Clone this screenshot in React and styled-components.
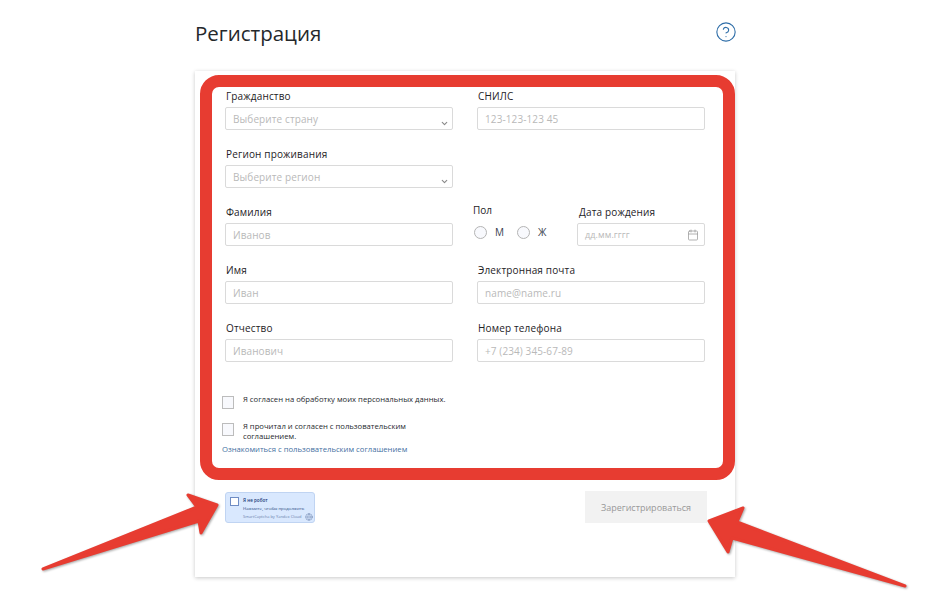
import React from "react";
import styled, { createGlobalStyle } from "styled-components";
import { Calendar, ChevronDown, CircleHelp, Globe } from "lucide-react";

const GlobalStyle = createGlobalStyle`
  html, body {
    margin: 0;
    background: #fff;
  }
  body {
    font-family: "Open Sans", "Noto Sans", sans-serif;
  }
`;

const App = () => {
  return (
    <Page>
      <GlobalStyle />
      <Column>
        <TitleRow>
          <Title>Регистрация</Title>
          <HelpIcon size={22} color="#2f6ea8" strokeWidth={1.2} />
        </TitleRow>
        <Card>
          <FormGrid>
            <Field>
              <Label>Гражданство</Label>
              <Select>
                Выберите страну
                <SelectArrow>
                  <ChevronDown size={9} strokeWidth={3} />
                </SelectArrow>
              </Select>
            </Field>
            <Field>
              <Label>СНИЛС</Label>
              <Input>123-123-123 45</Input>
            </Field>
            <Field>
              <Label>Регион проживания</Label>
              <Select>
                Выберите регион
                <SelectArrow>
                  <ChevronDown size={9} strokeWidth={3} />
                </SelectArrow>
              </Select>
            </Field>
            <div />
            <Field>
              <Label>Фамилия</Label>
              <Input>Иванов</Input>
            </Field>
            <SplitCell>
              <GenderGroup>
                <GenderLabel>Пол</GenderLabel>
                <RadioRow>
                  <Radio />
                  <RadioText>М</RadioText>
                  <Radio />
                  <RadioText>Ж</RadioText>
                </RadioRow>
              </GenderGroup>
              <DateField>
                <DateLabel>Дата рождения</DateLabel>
                <DateInput>
                  дд.мм.гггг
                  <Calendar size={12} color="#9a9a9a" strokeWidth={1.5} />
                </DateInput>
              </DateField>
            </SplitCell>
            <Field>
              <Label>Имя</Label>
              <Input>Иван</Input>
            </Field>
            <Field>
              <Label>Электронная почта</Label>
              <Input>name@name.ru</Input>
            </Field>
            <Field>
              <Label>Отчество</Label>
              <Input>Иванович</Input>
            </Field>
            <Field>
              <Label>Номер телефона</Label>
              <Input>+7 (234) 345-67-89</Input>
            </Field>
          </FormGrid>
          <Consents>
            <ConsentRow>
              <Checkbox />
              <ConsentText>Я согласен на обработку моих персональных данных.</ConsentText>
            </ConsentRow>
            <ConsentRow $second>
              <Checkbox />
              <ConsentText>
                Я прочитал и согласен с пользовательским
                <br />
                соглашением.
              </ConsentText>
            </ConsentRow>
            <AgreementLink>Ознакомиться с пользовательским соглашением</AgreementLink>
          </Consents>
          <BottomRow>
            <Captcha>
              <CaptchaBox />
              <CaptchaText>
                <CaptchaTitle>Я не робот</CaptchaTitle>
                <CaptchaHint>Нажмите, чтобы продолжить</CaptchaHint>
                <CaptchaBrand>
                  SmartCaptcha by Yandex Cloud
                  <Globe size={8} strokeWidth={1.5} />
                </CaptchaBrand>
              </CaptchaText>
            </Captcha>
            <SubmitButton>Зарегистрироваться</SubmitButton>
          </BottomRow>
          <RedFrame />
        </Card>
      </Column>
      <Arrows viewBox="0 0 948 603">
        <path d="M43 569 L197 507 L188 495 L217 505 L201 533 L199 521 Z" />
        <path d="M905 586 L737 522 L743 508 L709 521 L728 552 L732 538 Z" />
      </Arrows>
    </Page>
  );
};

const Page = styled.div`
  position: relative;
  width: 948px;
  height: 603px;
  overflow: hidden;
  background: #fff;
`;

const Column = styled.div`
  width: 540px;
  margin-left: 195px;
`;

const TitleRow = styled.div`
  display: flex;
  align-items: center;
  justify-content: space-between;
  height: 64px;
  margin-bottom: 7px;
`;

const HelpIcon = styled(CircleHelp)`
  margin-right: -2px;
`;

const Title = styled.h1`
  margin: 2px 0 0;
  font-size: 20.5px;
  font-weight: 400;
  color: #25282b;
`;

const Card = styled.div`
  position: relative;
  height: 506px;
  box-sizing: border-box;
  padding: 16px 30px 0;
  background: #fff;
  box-shadow: 0 1px 4px rgba(0, 0, 0, 0.22);
`;

const RedFrame = styled.div`
  position: absolute;
  top: 4px;
  left: 5px;
  width: 535px;
  height: 405px;
  box-sizing: border-box;
  border: 12px solid #e73c31;
  border-radius: 19px;
`;

const FormGrid = styled.div`
  display: grid;
  grid-template-columns: 228px 228px;
  grid-auto-rows: 58px;
  column-gap: 24px;
`;

const Field = styled.div`
  display: flex;
  flex-direction: column;
`;

const Label = styled.label`
  height: 20px;
  margin-left: 1px;
  font-size: 10px;
  line-height: 19px;
  letter-spacing: 0.15px;
  color: #1e2226;
`;

const Input = styled.div`
  display: flex;
  align-items: center;
  justify-content: space-between;
  height: 23px;
  box-sizing: border-box;
  padding: 0 7px;
  border: 1px solid #dadada;
  border-radius: 2px;
  font-size: 10px;
  letter-spacing: 0.1px;
  color: #b9b9b9;
`;

const Select = styled(Input)`
  position: relative;
`;

const SelectArrow = styled.span`
  position: absolute;
  right: 3px;
  bottom: 1px;
  display: flex;
  color: #8a8a8a;
`;

const SplitCell = styled.div`
  display: flex;
  justify-content: space-between;
`;

const GenderGroup = styled.div`
  margin-left: -4px;
`;

const GenderLabel = styled.div`
  height: 22px;
  font-size: 10px;
  line-height: 14px;
  color: #1e2226;
`;

const RadioRow = styled.div`
  display: flex;
  align-items: center;
  margin-left: 1px;
`;

const Radio = styled.span`
  width: 13px;
  height: 13px;
  box-sizing: border-box;
  border: 1px solid #b4b4b4;
  border-radius: 50%;
  background: #f8f9fd;
`;

const RadioText = styled.span`
  width: 30px;
  padding-left: 8px;
  box-sizing: border-box;
  font-size: 10px;
  color: #3b3f50;
`;

const DateField = styled(Field)`
  width: 128px;
`;

const DateLabel = styled(Label)`
  margin-left: 2px;
`;

const DateInput = styled(Input)`
  font-size: 9px;
  letter-spacing: 0.1px;
  padding-right: 5px;
`;

const Consents = styled.div`
  padding-top: 17px;
  margin-left: -3px;
`;

const ConsentRow = styled.div`
  display: flex;
  align-items: flex-start;
  gap: 9px;
  margin-top: ${(p) => (p.$second ? "12px" : "0")};
`;

const Checkbox = styled.span`
  flex: none;
  width: 12px;
  height: 13px;
  box-sizing: border-box;
  margin-top: 2px;
  border: 1px solid #bcbcbc;
  background: #f8f9fd;
`;

const ConsentText = styled.span`
  font-size: 7.7px;
  line-height: 10px;
  color: #26292d;
`;

const AgreementLink = styled.a`
  display: block;
  margin-top: 3px;
  font-size: 7.7px;
  line-height: 11px;
  color: #3f6f9f;
`;

const BottomRow = styled.div`
  display: flex;
  align-items: flex-start;
  justify-content: space-between;
  margin-top: 36px;
  margin-right: -2px;
`;

const Captcha = styled.div`
  display: flex;
  gap: 4px;
  width: 90px;
  height: 31px;
  box-sizing: border-box;
  padding: 4px 1px 1px 4px;
  border: 1px solid #c0d4f2;
  border-radius: 3px;
  background: #d9e8fe;
  margin-top: 1px;
`;

const CaptchaBox = styled.span`
  flex: none;
  width: 9px;
  height: 9px;
  box-sizing: border-box;
  border: 1px solid #6f8cc4;
  background: #fff;
`;

const CaptchaText = styled.div`
  flex: 1;
  display: flex;
  flex-direction: column;
  margin-top: -1px;
`;

const CaptchaTitle = styled.div`
  font-size: 4.6px;
  line-height: 8px;
  font-weight: 600;
  color: #1c3a78;
`;

const CaptchaHint = styled.div`
  font-size: 4.3px;
  line-height: 9px;
  color: #2a4a82;
`;

const CaptchaBrand = styled.div`
  display: flex;
  align-items: center;
  justify-content: space-between;
  font-size: 4px;
  line-height: 8px;
  color: #6b82ad;
`;

const SubmitButton = styled.button`
  width: 122px;
  height: 32px;
  padding: 0;
  border: none;
  background: #f2f2f2;
  font-family: inherit;
  font-size: 9px;
  color: #999;
`;

const Arrows = styled.svg`
  position: absolute;
  top: 0;
  left: 0;
  width: 948px;
  height: 603px;
  pointer-events: none;
  fill: #e73c31;
  stroke: #e73c31;
  stroke-width: 3;
  stroke-linejoin: round;
  filter: drop-shadow(1px 1px 1px rgba(0, 0, 0, 0.35));
`;

export default App;
